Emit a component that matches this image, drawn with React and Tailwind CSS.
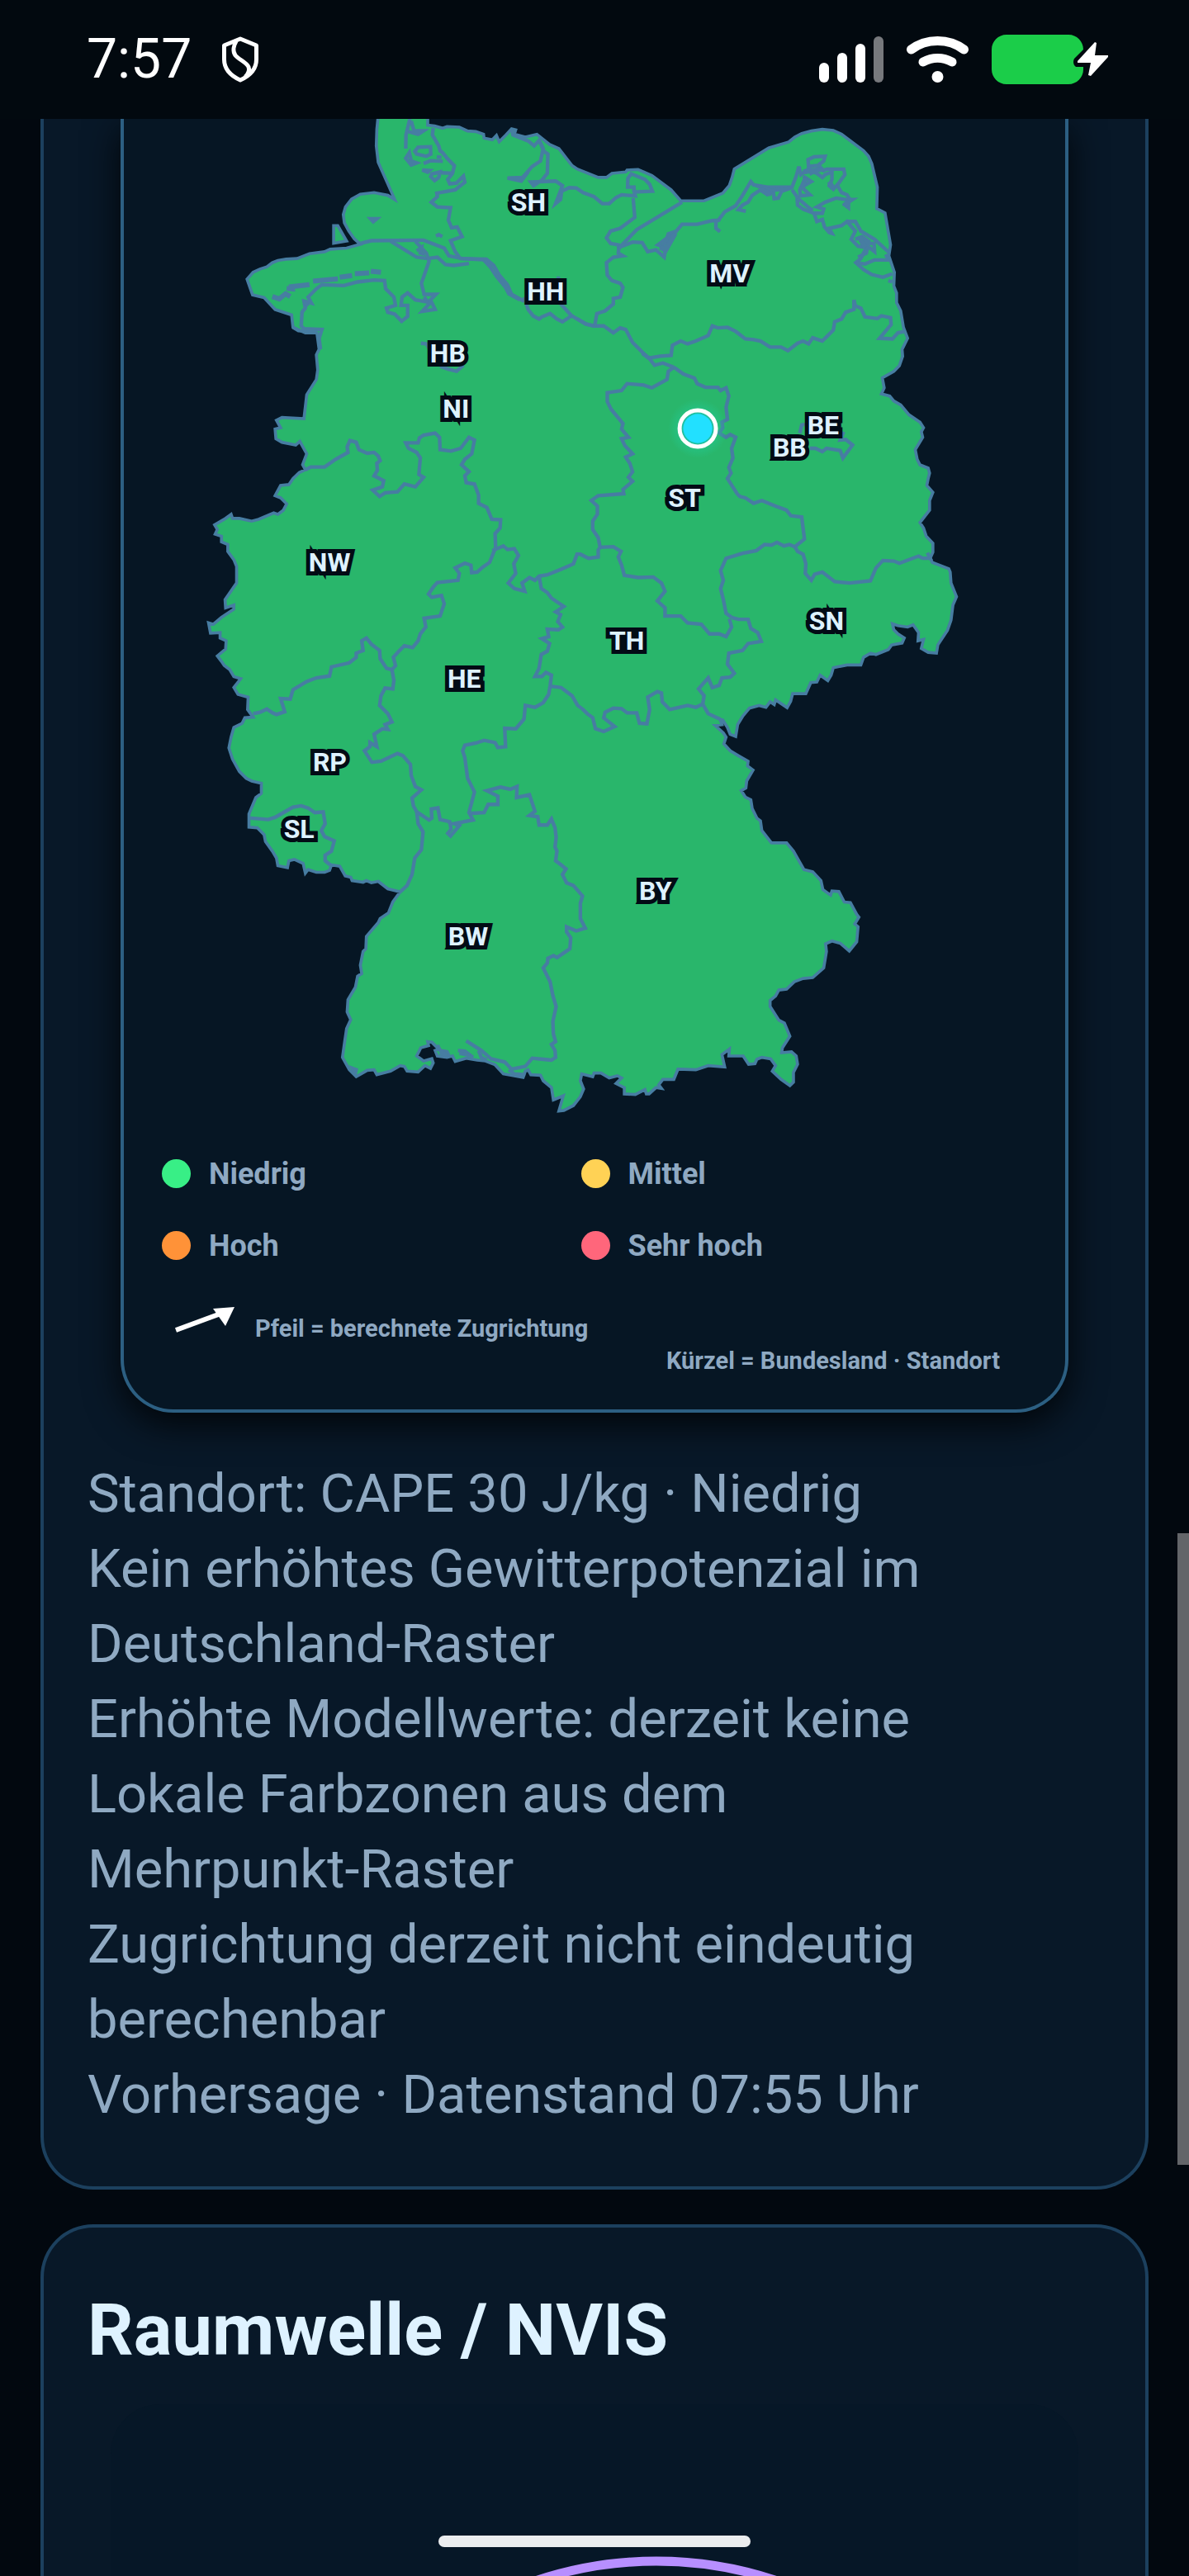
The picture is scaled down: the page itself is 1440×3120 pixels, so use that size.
// Map geometry is drawn in six survey sheets; each sheet has its own origin.
const SHEETS = {
  nw: [0, 0],
  ne: [1380, 0],
  w: [0, 1290],
  e: [1380, 1290],
  sw: [0, 2550],
  se: [1200, 2550],
};

// Joins [sheet, "x y x y ..."] pieces into one polyline path.
function line(...pieces) {
  const out = [];
  for (const [sheet, text] of pieces) {
    const [dx, dy] = SHEETS[sheet];
    const n = text.trim().split(/\s+/).map(Number);
    for (let i = 0; i < n.length; i += 2) out.push(`${n[i] + dx} ${n[i + 1] + dy}`);
  }
  return `M${out.join("L")}`;
}

const COUNTRY = line(
  ["nw", "835 30 835 65 860 68 890 76 905 70 950 72 980 86 1010 88 1038 98 1040 112 1070 118 1085 102 1095 125 1120 100 1140 78 1155 82 1150 98 1190 108 1232 98 1278 135 1312 150 1360 212"],
  ["ne", "0 225 75 255 105 255 125 240 175 235 180 228 220 226 270 248 340 300 375 340 460 340 528 312 552 284 562 255 570 224 695 148 768 126 790 108 815 95 850 86 890 80 930 84 960 98 1040 158 1058 178 1070 205 1090 290 1088 368 1118 384 1138 500 1132 540 1152 600 1150 650 1160 675 1160 710 1175 740 1185 800 1200 840 1180 880 1182 905 1170 940 1150 960 1108 984 1115 1020 1105 1042 1135 1050 1150 1068 1175 1082 1205 1118 1245 1145 1258 1165 1250 1180 1255 1200 1228 1245 1235 1280 1245 1300 1275 1312 1280 1330 1275 1350"],
  ["e", "1270 85 1292 110 1280 140 1280 175 1245 220 1258 240 1268 270 1292 295 1292 328 1282 350 1290 365 1350 388 1355 400 1358 440 1378 490 1365 520 1358 575 1345 612 1310 665 1305 695 1275 692 1250 678 1258 645 1238 650 1240 620 1220 592 1200 600 1165 595 1145 588 1150 610 1165 625 1188 640 1180 658 1142 665 1130 682 1085 700 1065 695 1040 710 1030 738 980 738 930 748 922 775 910 795 882 775 870 800 848 802 830 842 782 842 775 870 762 893 720 865 715 882 700 872 685 892 660 885 625 895 600 925 582 955 575 998 555 990 545 965 528 938 518 935 525 955 500 958 530 985 540 1000 532 1025 555 1050 585 1068 620 1088 618 1105 638 1120 615 1160 612 1185 595 1195 610 1218 630 1228 635 1260 652 1295 665 1305 670 1340 705 1385 760 1385 785 1415"],
  ["se", "985 190 1003 222 1035 230 1065 262 1072 295 1100 315 1105 300 1130 302 1150 340 1172 342 1195 385 1203 395 1188 420 1200 430 1195 485 1168 518 1135 490 1105 482 1082 492 1085 520 1080 550 1075 580 1035 615 1000 618 968 630 940 657 912 660 900 682 880 698 880 720 912 770 932 780 952 828 925 870 922 888 958 885 975 900 980 930 965 960 965 995 952 1008 920 985 888 955 900 935 882 910 850 905 832 912 825 928 802 930 782 900 730 900 732 875 705 895 715 940 655 935 610 950 545 948 530 985 490 985 475 1005 485 1018 465 1015 440 1038 430 1038 425 1022 390 1040 350 1038 350 1015 320 1000 340 980 325 972 295 980 265 962 240 962 235 975 195 965 190 990 202 1020 190 1048 165 1080 130 1098 112 1100 128 1045 92 1060 85 1015 55 990 45 970 10 968"],
  ["sw", "1200 950 1190 955 1182 978 1150 972 1110 965 1080 932 1045 918 1015 915 975 908 935 920 925 900 905 905 870 900 862 880 875 875 850 850 835 848 838 862 810 870 795 900 820 918 850 910 855 925 845 945 825 935 800 958 760 955 750 938 735 935 700 955 650 968 640 950 615 952 575 975 550 950 525 905 532 855 540 800 555 768 542 740 545 695 572 650 580 610 595 600 590 570 600 520 610 510 612 465 655 415 662 400 692 380 708 340 735 303 690 292 655 265 630 270 612 262 600 268 560 262 555 250 535 245 515 210 485 205 478 225 460 232 430 232 400 222 390 235 382 200 350 185 330 190 325 215 290 208 285 180 270 155 245 120 240 95 215 70 185 68 185 35"],
  ["w", "185 1280 210 1220 230 1205 230 1168 195 1160 175 1150 150 1125 125 1080 112 1040 120 1000 130 965 160 950 170 930 200 928 180 900 182 855 145 845 130 820 155 788 130 780 115 755 95 740 85 725 70 705 100 680 102 650 80 640 80 620 45 622 38 585 55 590 85 565 130 535 130 520 100 530 98 500 140 440 140 380 130 355 108 325 108 300 85 290 85 270 62 262 70 245 60 228 95 208 120 190 125 205 150 205 195 215 220 208 275 185 290 190 310 175 322 152 300 130 280 122 300 85 330 82 345 60 368 38 390 28"],
  ["nw", "380 1300 395 1260 370 1215 355 1228 305 1218 283 1205 280 1170 300 1165 285 1138 305 1128 385 1132 395 1045 430 990 435 955 430 900 440 880 432 820 390 820 345 800 340 755 280 735 240 692 198 682 178 625 200 600 225 588 250 580 270 565 290 557 320 552 360 550 405 532 460 525 480 516 540 512 590 498 568 478 548 450 532 420 528 390 536 362 558 334 590 316 640 310 690 320 715 335 655 200 648 140 650 80 655 30"],
) + "Z";

const HELGOLAND_EDGE = line(["nw", "493 430 508 430 540 486 493 494"]) + "Z";

const BORDERS = [
  // North Sea coast of Schleswig-Holstein and its islands
  line(["nw", "855 75 852 100 875 140 880 158 890 165 905 185 932 212 925 240 908 262 915 278 940 275 965 250 970 272 935 300 868 312 870 325 848 345 870 362 918 365 910 410 922 438 942 435 960 470 918 485 935 525 950 545"]),
  line(["nw", "770 42 756 100 755 150"]),
  line(["nw", "775 50 785 85 820 85 800 98 765 88"]),
  line(["nw", "788 160 800 145 845 143 846 170 830 178 795 170"]) + "Z",
  line(["nw", "768 165 755 185 775 210 795 202 775 195"]) + "Z",
  line(["nw", "820 204 845 194 890 196"]),
  line(["nw", "815 228 842 230 835 236"]) + "Z",
  line(["nw", "850 242 880 235 875 255 860 266 846 252"]) + "Z",
  line(["nw", "885 238 925 240"]),
  line(["nw", "868 180 885 182"]),
  // Baltic coast of Schleswig-Holstein
  line(["nw", "1140 78 1145 100 1200 122 1222 140 1240 120 1255 150 1245 195 1215 215 1180 255 1125 257 1175 268 1200 235"]),
  line(["nw", "1240 120 1258 160 1272 170 1270 240 1250 265 1220 285 1210 272 1300 268 1325 285 1300 350 1318 335 1322 305 1350 292 1375 293"], ["ne", "20 310 60 325 90 350 115 350 140 328 160 318 210 322 206 308 272 305 262 280 245 262 195 242 183 258 182 290 205 290 206 310"]),
  line(["ne", "202 330 208 400 155 440 120 450 105 475 120 495 148 500 150 515"]),
  line(["ne", "380 345 215 445 150 512"]),
  // Elbe and Weser mouths
  line(["nw", "590 495 630 485 820 483 895 512 912 540 960 550 1050 555"]),
  line(["nw", "950 550 1048 552 1075 575 1095 610 1125 645 1140 680 1185 705"]),
  line(["nw", "1040 556 1062 580 1085 615 1118 655 1130 678 1170 700"]),
  line(["nw", "700 487 795 545 835 550 870 545 900 572 930 575 985 568"]),
  line(["nw", "790 487 830 530 840 560 812 640 822 680 865 680 845 700 862 735 815 742 840 715 822 690"]),
  line(["nw", "795 522 812 510 808 530 825 535"]),
  line(["nw", "835 708 790 700 762 675 742 690 738 720 762 720 762 760 740 778 715 752 690 745 685 730 718 720 712 690 682 660 678 630 640 628 580 635 530 648 450 645 430 660 400 690 412 712 385 705 390 730 378 745 375 795 385 805 450 808 440 840 445 880"]),
  line(["nw", "345 800 365 812 430 815"]),
  line(["nw", "385 705 400 722"]),
  // Hamburg and Bremen
  line(["nw", "1185 690 1200 735 1218 758 1240 770 1250 762 1280 750 1305 770 1325 780 1358 758 1310 705 1310 615"]),
  line(["nw", "1358 758 1410 788 1440 795"]),
  line(["nw", "810 858 830 860 845 885"]),
  line(["nw", "880 942 910 952 940 960 965 938"]),
  line(["nw", "627 405 650 405 637 416"]) + "Z",
  line(["nw", "865 468 875 463 888 470"]),
  // Lower Saxony / North Rhine-Westphalia / Hesse
  line(["nw", "390 1318 410 1308 460 1308 500 1280 545 1255 542 1235 552 1212 575 1218 585 1245 615 1258 640 1255 655 1268 662 1285 650 1295 652 1320 640 1340 675 1358 670 1380 635 1392 660 1415 680 1402 725 1398 750 1370 790 1380 820 1345 803 1335 808 1275 795 1255 765 1240 755 1220 800 1220 805 1202 820 1192 862 1185 878 1200 880 1245 920 1250 955 1240 985 1200 1005 1210 995 1260 970 1280 958 1300 985 1325 970 1340 975 1365 1005 1370 1020 1410 1020 1440"], ["w", "1050 165 1068 208 1100 210 1098 240 1080 260 1082 310"]),
  line(["w", "1070 322 1110 305 1125 318 1150 315 1165 340 1148 370 1155 405 1128 440 1150 460 1188 470 1178 440 1205 420 1225 430 1240 415 1270 410 1320 390 1365 370 1378 335"], ["e", "10 335 40 350 75 345 75 320 82 310"]),
  line(["w", "1082 310 1060 365 1035 382 1015 400 995 402 992 375 970 368 935 385 950 405 945 430 870 438 855 455 838 480 850 492 885 485 895 515 880 560 822 568 828 600 808 625 800 650 780 675 750 668 730 688 710 710 718 740 705 755"]),
  line(["w", "200 915 225 910 250 898 270 912 285 918 315 908 308 885 300 860 335 862 345 828 395 798 430 785 478 778 485 745 550 730 575 710 575 695 600 685 595 650 612 640 630 662 660 685 662 715 685 750 705 755"]),
  line(["w", "705 755 712 795 708 825 680 822 665 850 660 885 690 915 705 945 680 955 690 972 670 970 640 990 650 1035 625 1020 625 1035 605 1050 632 1092 665 1088 725 1060 745 1068 772 1100 775 1140 790 1180 812 1192 778 1222 783 1250 795 1272"]),
  line(["w", "795 1272 840 1302 850 1295 848 1262 872 1258 880 1300 915 1308 920 1335 908 1350 918 1360 950 1322 930 1315 1000 1302 985 1275 1005 1200 980 1150 970 1075 962 1050 970 1030 1010 1022 1040 1012 1080 1020 1090 1038 1118 1035 1115 968 1155 970 1185 935 1190 885 1225 892 1255 875 1275 845 1280 815"]),
  // Thuringia
  line(["w", "1240 415 1248 460 1270 475 1285 495 1330 525 1300 545 1318 555 1308 580 1325 600 1310 610 1270 608 1275 635 1250 642 1278 660 1270 688 1248 700 1240 750 1225 780 1250 780 1265 765 1285 775 1280 815"]),
  line(["w", "1280 815 1320 820 1360 850 1380 885 1400 900"], ["e", "35 915 55 930 65 970 95 980 135 962 95 930 100 910 130 895 160 897 180 912 215 912 225 950 252 952 262 900 255 855 290 835 305 840 308 872 335 900 400 885 430 892 455 880"]),
  line(["e", "455 880 475 915 518 935"]),
  line(["e", "455 880 460 850 440 825 475 785 490 820 515 812 525 785 555 782 570 768 545 735 550 695 600 685 620 660 668 652 655 620 630 605 620 572 585 572 560 565"]),
  // Saxony-Anhalt
  line(["e", "80 310 130 308 158 325 148 345 160 375 170 412 220 420 275 418 305 440 318 470 290 505 318 530 318 560 375 560 400 585 450 590 480 625 515 625 540 635 560 600 552 570"]),
  line(["e", "560 565 540 550 530 500 520 460 530 430 520 395 540 350 600 332 650 322 680 300 705 302 725 292 750 305 770 300 790 308"]),
  line(["ne", "350 945 330 960 325 990 270 1020 240 1010 180 1005 160 1030 108 1038 108 1070 122 1098 165 1150 160 1170 185 1200 160 1205 172 1230 200 1260 175 1272 190 1295 200 1325 185 1345 200 1360 165 1390 168 1405 75 1412 50 1430"], ["e", "72 160 72 190 55 215 55 245 75 275 82 310"]),
  line(["ne", "350 945 385 970 425 985 435 1005 465 1018 510 1018 520 1030 540 1020 550 1050 540 1090 545 1135 525 1145 528 1165 515 1185 540 1200 555 1190 575 1200 560 1240 565 1275 550 1310 558 1330 545 1350"], ["e", "580 115 590 125 610 130 640 150 670 140 720 160 760 175 775 195 815 200 820 240 825 280 790 308"]),
  // Brandenburg / Saxony
  line(["e", "790 308 800 325 820 335 830 370 828 405 850 430 862 408 890 400 935 435 990 440 1065 432 1085 385 1110 358 1150 360 1170 368 1240 342 1255 350 1282 350 1272 330"]),
  // Mecklenburg-Vorpommern
  line(["ne", "0 770 30 788 60 795 95 795 130 820 155 802 175 808 200 855 240 895 260 912 300 905 340 902 345 865 375 850 400 860 430 850 475 830 490 795 510 802 545 800 575 815 610 842 640 845 665 850 700 872 740 872 765 885 800 858 820 850 840 860 855 838 890 850 930 810 935 780 960 770 975 745 1005 735 1005 700 1010 722 1030 730 1045 762 1090 768 1105 758 1138 765 1140 790 1098 840 1145 842 1165 820 1190 815"]),
  line(["ne", "235 895 262 915 280 938 310 930 350 945"]),
  line(["ne", "62 795 70 750 100 740 130 715 130 695 155 690 165 655 155 640 125 630 108 610 105 565 130 545 165 540 148 530 150 510"]),
  line(["ne", "150 510 200 490 235 492 255 525 285 518 315 545 320 510 292 500 325 475 330 460 360 450 340 470 310 500 325 490 380 425 435 425 490 412 512 410 535 380 575 358 600 320 630 270 640 282 690 290 780 290 795 250 805 215"]),
  line(["ne", "518 408 503 415 503 440 518 452"]),
  line(["ne", "612 378 585 372 600 355 620 345 635 320 665 300 690 318 712 310 715 332 730 330 742 305 780 292"]),
  line(["ne", "650 285 700 302 750 298"]),
  line(["ne", "805 215 812 245 845 220 850 240 880 225 880 210 840 215 838 190 860 180 900 178 895 195 875 210 895 230 905 225 968 225 972 245 950 275 930 298 915 285 925 262 925 235 900 245 890 255 870 240 855 235"]),
  line(["ne", "820 250 850 270 815 290 845 318 810 322 808 300 825 265"]),
  line(["ne", "780 300 798 325 800 355 820 370 860 385 890 385 895 370 870 362 900 345 940 330 975 335 1000 335 985 345 985 365 965 350"]),
  line(["ne", "800 330 835 360 855 375"]),
  line(["ne", "945 285 960 310 980 318 990 335"]),
  line(["ne", "860 385 870 415 890 408 898 435 915 455 925 458 915 440 960 430 980 415 1010 450 995 480 1020 505 1050 510 1040 530 1030 550 1012 565 1040 590 1070 608 1110 618 1145 605"]),
  line(["ne", "980 415 1010 415 1030 450 1080 480 1135 530"]),
  line(["ne", "1015 565 1045 570 1080 555 1132 555 1120 535"]),
  line(["ne", "1010 480 1035 470 1055 485 1030 495 1078 495 1080 525 1055 505 1050 530 1020 545"]),
  line(["ne", "1130 630 1145 635"]),
  // Berlin
  line(["ne", "808 1185 815 1155 835 1152"]),
  line(["ne", "845 1240 865 1240 890 1252 905 1240 955 1248 965 1275 1000 1228 975 1208 955 1210 968 1180"]),
  // Saarland
  line(["w", "190 1295 230 1298 255 1300 280 1292 310 1275 345 1255 375 1250 400 1258 425 1275 455 1272 462 1315 448 1340 460 1362 495 1378 485 1415 462 1430"], ["sw", "462 190 480 205"]),
  // Rhineland-Palatinate / Baden-Württemberg / Bavaria
  line(["w", "795 1272 800 1315 818 1345 812 1410"], ["sw", "788 180 778 240 760 280 735 303"]),
  line(["w", "985 1278 1040 1275 1055 1245 1090 1245 1090 1215 1050 1195 1100 1182 1135 1190 1160 1180 1158 1220 1205 1210 1225 1270 1205 1285 1235 1290 1240 1320 1270 1320 1285 1298 1298 1330 1302 1365 1298 1400"], ["se", "105 155 100 190 120 205 138 220 125 240 140 270 165 280 198 318 190 345 190 400 208 435 175 445 140 430 140 448 155 470 152 510 130 525 105 542 92 535 72 545 70 562 55 580 80 630 90 680 102 720 90 775 92 820 100 848 85 858 98 880 100 905 85 915 55 912 15 908"], ["sw", "1190 938 1140 948 1115 922 1065 910 1030 880 975 845"]),
  line(["sw", "1020 880 1030 905 1050 915"]),
  line(["sw", "945 880 970 882 1000 905"]),
  line(["sw", "950 890 990 898"]),
  line(["sw", "1130 950 1150 965 1190 968"]),
  line(["sw", "870 860 880 880 905 885 915 905"]),
  line(["sw", "562 945 575 950 572 962"]) + "Z",
];

const ISLANDS = [
  line(["nw", "628 596 665 600"]),
  line(["nw", "570 605 622 602"]),
  line(["nw", "515 618 560 612"]),
  line(["nw", "418 632 508 624"]),
  line(["nw", "322 658 342 660 340 652 405 645"]),
  line(["nw", "270 688 295 697 318 678 335 688"]),
  line(["ne", "300 508 320 520 355 458"]),
  line(["ne", "660 298 705 315"]),
  line(["ne", "820 235 890 225"]),
  line(["ne", "815 300 830 255"]),
  line(["ne", "1025 470 1045 510"]),
  line(["ne", "970 345 985 360"]),
  line(["ne", "915 270 930 295"]),
  line(["sw", "880 885 905 898"]),
];

const LABELS = [
  ["SH", 1201, 378],
  ["HH", 1264, 703],
  ["HB", 908, 927],
  ["NI", 938, 1128],
  ["MV", 1933, 636],
  ["BB", 2151, 1269],
  ["BE", 2273, 1188],
  ["ST", 1769, 1454],
  ["NW", 478, 1688],
  ["HE", 968, 2112],
  ["RP", 479, 2415],
  ["SL", 367, 2658],
  ["TH", 1559, 1972],
  ["SN", 2285, 1902],
  ["BW", 982, 3048],
  ["BY", 1663, 2883],
];

const LEGEND = [
  ["Niedrig", "bg-[#38ef86]"],
  ["Mittel", "bg-[#ffd255]"],
  ["Hoch", "bg-[#ff9238]"],
  ["Sehr hoch", "bg-[#ff667b]"],
];

function GermanyMap() {
  return (
    <svg viewBox="-270 42 3423 3648" className="block w-full" role="img" aria-label="Gewitterpotenzial in Deutschland">
      <defs>
        <radialGradient id="glow">
          <stop offset="0.55" stopColor="#22d0a0" stopOpacity="0.5" />
          <stop offset="1" stopColor="#22d0a0" stopOpacity="0" />
        </radialGradient>
      </defs>
      <g fill="#29b66b" stroke="#477da2" strokeWidth="11">
        <path d={COUNTRY} />
        <path d={HELGOLAND_EDGE} />
      </g>
      <g fill="none" stroke="#477da2" strokeWidth="13">
        {BORDERS.map((d) => (
          <path key={d} d={d} />
        ))}
      </g>
      <g fill="none" stroke="#477da2" strokeWidth="18">
        {ISLANDS.map((d) => (
          <path key={d} d={d} />
        ))}
      </g>
      <g
        fill="#def2ff"
        stroke="#020b15"
        strokeWidth="30"
        paintOrder="stroke"
        textAnchor="middle"
        fontSize="96"
        fontWeight="700"
      >
        {LABELS.map(([name, x, y]) => (
          <text key={name} x={x} y={y}>
            {name}
          </text>
        ))}
      </g>
      <circle cx="1817" cy="1168" r="108" fill="url(#glow)" />
      <circle cx="1817" cy="1168" r="60" fill="#1fc0a0" />
      <circle cx="1817" cy="1168" r="53" fill="#22e0ff" />
      <circle cx="1817" cy="1168" r="66" fill="none" stroke="#fff" strokeWidth="15" />
    </svg>
  );
}

function StatusBar() {
  return (
    <header className="flex h-36 shrink-0 items-center justify-between bg-[#02090f] pr-[96px] pl-[105px] text-white">
      <div className="flex items-center gap-[36px]">
        <time className="text-[66px] leading-[76px]">7:57</time>
        <svg width="46" height="58" viewBox="0 0 46 58" fill="none" stroke="#fff" strokeWidth="5" strokeLinejoin="round" aria-hidden="true">
          <path d="M23 4L42.500 12V29C42.500 41 34 49 23 54C12 49 3.500 41 3.500 29V12Z" />
          <path d="M18 7C15 12 13.500 19 17 24C21 29 30 32 33 38C35 43 32 47 29 50" />
        </svg>
      </div>
      <div className="flex items-center gap-7">
        <svg width="78" height="56" viewBox="0 0 78 56" fill="#fff" aria-hidden="true">
          <rect x="0" y="32" width="12" height="24" rx="6" />
          <rect x="22" y="20" width="12" height="36" rx="6" />
          <rect x="44" y="9" width="12" height="47" rx="6" />
          <rect x="66" y="0" width="12" height="56" rx="6" fill="#77797d" />
        </svg>
        <svg width="75" height="56" viewBox="0 0 75 56" fill="none" stroke="#fff" strokeWidth="11" strokeLinecap="round" aria-hidden="true">
          <path d="M5.500 16C24 2 51 2 69.500 16" />
          <path d="M20 31C31 25 44 25 55 31" />
          <circle cx="37.500" cy="49" r="7" fill="#fff" stroke="none" />
        </svg>
        <svg width="143" height="60" viewBox="0 0 143 60" aria-hidden="true">
          <path d="M18 0H93C103 0 111 8 111 18L100 29Q98 33 100 37L102 39H111V42C111 52 103 60 93 60H18C8 60 0 52 0 42V18C0 8 8 0 18 0Z" fill="#1bcd49" />
          <path d="M125 9L104 32V34H120L117 49L120 50L141 27V25H125L127 10Z" fill="#fff" />
        </svg>
      </div>
    </header>
  );
}

export default function App() {
  return (
    <div className="relative flex min-h-screen flex-col overflow-hidden bg-[#02080f] font-['Roboto',sans-serif] text-[#8fa9c2]">
      <StatusBar />
      <main className="flex flex-1 flex-col gap-[42px] px-[49px]">
        <section className="overflow-hidden rounded-b-[64px] border-x-4 border-b-4 border-[#1c405e] bg-[#081828] px-[53px] pb-[65px]">
          <div className="mx-10 rounded-b-[64px] border-x-4 border-b-4 border-[#2c5f82] bg-[#061624] shadow-[0_14px_44px_rgba(0,0,0,0.8)]">
            <GermanyMap />
            <div className="pr-[79px] pb-[41px] pl-[46px] font-bold">
              <ul className="grid grid-cols-2 gap-y-[43px] pt-[41px] text-[36px] leading-[44px]">
                {LEGEND.map(([name, color]) => (
                  <li key={name} className="flex items-center gap-[22px]">
                    <span className={`size-[35px] shrink-0 rounded-full ${color}`} />
                    {name}
                  </li>
                ))}
              </ul>
              <div className="flex items-start gap-6 pt-12 pl-4 text-[29px] leading-[36px]">
                <svg width="73" height="40" viewBox="0 0 73 40" aria-hidden="true">
                  <path d="M1 32L58 11" stroke="#fff" strokeWidth="6" />
                  <path d="M72 4L46 6L61 27Z" fill="#fff" />
                </svg>
                <span className="pt-3">Pfeil = berechnete Zugrichtung</span>
              </div>
              <p className="pt-[3px] text-right text-[29px] leading-[36px]">Kürzel = Bundesland · Standort</p>
            </div>
          </div>
          <p className="pt-[53px] text-[65px] leading-[91px]">
            Standort: CAPE 30 J/kg · Niedrig
            <br />
            Kein erhöhtes Gewitterpotenzial im
            <br />
            Deutschland-Raster
            <br />
            Erhöhte Modellwerte: derzeit keine
            <br />
            Lokale Farbzonen aus dem
            <br />
            Mehrpunkt-Raster
            <br />
            Zugrichtung derzeit nicht eindeutig
            <br />
            berechenbar
            <br />
            Vorhersage · Datenstand 07:55 Uhr
          </p>
        </section>
        <section className="flex flex-1 flex-col overflow-hidden rounded-t-[64px] border-x-4 border-t-4 border-[#1c405e] bg-[#081828] px-[53px] pt-16">
          <h2 className="text-[87px] leading-[120px] font-bold text-[#def2ff]">Raumwelle / NVIS</h2>
          <div className="mx-7 mt-[30px] flex flex-1 flex-col justify-end rounded-t-[60px] bg-[#061727]">
            <svg viewBox="0 0 1174 24" className="block w-full" aria-hidden="true">
              <circle cx="662" cy="466" r="460" fill="none" stroke="#b78fff" strokeWidth="11" />
            </svg>
          </div>
        </section>
      </main>
      <div className="absolute top-[1857px] right-0 h-[765px] w-3.5 bg-[#636569]" />
      <div className="absolute bottom-[35px] left-1/2 h-3.5 w-[378px] -translate-x-1/2 rounded-full bg-[#ebedef]" />
    </div>
  );
}
